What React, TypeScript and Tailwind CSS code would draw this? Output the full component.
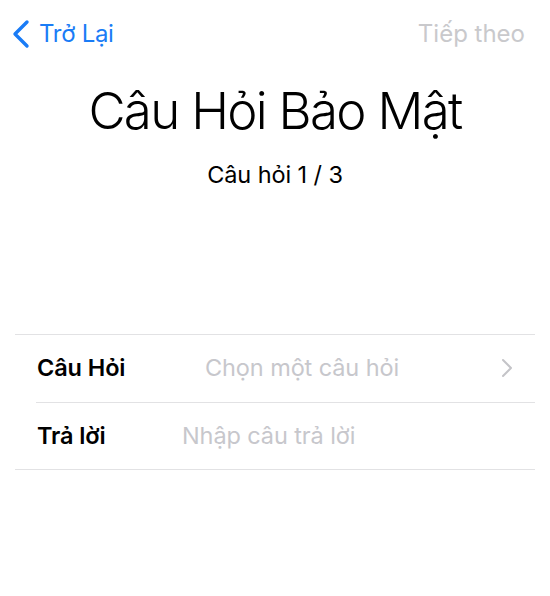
const font = { fontFamily: 'Inter, "Noto Sans", sans-serif' };

export default function App() {
  return (
    <div className="w-[550px] h-[596px] bg-white text-black" style={font}>
      {/* Nav bar */}
      <div className="flex items-center justify-between h-[68px] pl-[10px] pr-[25px]">
        <div className="flex items-center text-[#1a7cf6]">
          <svg width="22" height="30" viewBox="0 0 22 30" fill="none">
            <path d="M17 3 L5 15 L17 27" stroke="currentColor" strokeWidth="3.4" strokeLinecap="round" strokeLinejoin="round" />
          </svg>
          <span className="text-[24px] ml-[7px] tracking-[-0.3px]">Trở Lại</span>
        </div>
        <span className="text-[24px] text-[#c9c9cc]">Tiếp theo</span>
      </div>

      {/* Title */}
      <div className="flex flex-col items-center">
        <h1 className="text-[51px] font-light leading-none mt-[17px] tracking-[-1.7px]">Câu Hỏi Bảo Mật</h1>
        <p className="text-[23.5px] leading-none mt-[27px] tracking-[-0.1px]">Câu hỏi 1 / 3</p>
      </div>

      {/* Form */}
      <div className="mx-[15px] mt-[147px] border-t border-[#e2e2e4]">
        <div className="flex items-center h-[67px] pl-[22px] pr-[22px]">
          <span className="w-[168px] text-[23.5px] font-semibold tracking-[-0.1px]">Câu Hỏi</span>
          <span className="flex-1 text-[23.5px] text-[#c7c7cc] tracking-[-0.1px]">Chọn một câu hỏi</span>
          <svg width="12" height="20" viewBox="0 0 12 20" fill="none">
            <path d="M2 2 L10 10 L2 18" stroke="#c4c4c8" strokeWidth="2" strokeLinecap="round" strokeLinejoin="round" />
          </svg>
        </div>
        <div className="ml-[21px] border-t border-[#e2e2e4]" />
        <div className="flex items-center h-[67px] pl-[22px] border-b border-[#e2e2e4]">
          <span className="w-[145px] text-[23.5px] font-semibold tracking-[-0.1px]">Trả lời</span>
          <span className="flex-1 text-[23.5px] text-[#c7c7cc] tracking-[-0.1px]">Nhập câu trả lời</span>
        </div>
      </div>
    </div>
  );
}
